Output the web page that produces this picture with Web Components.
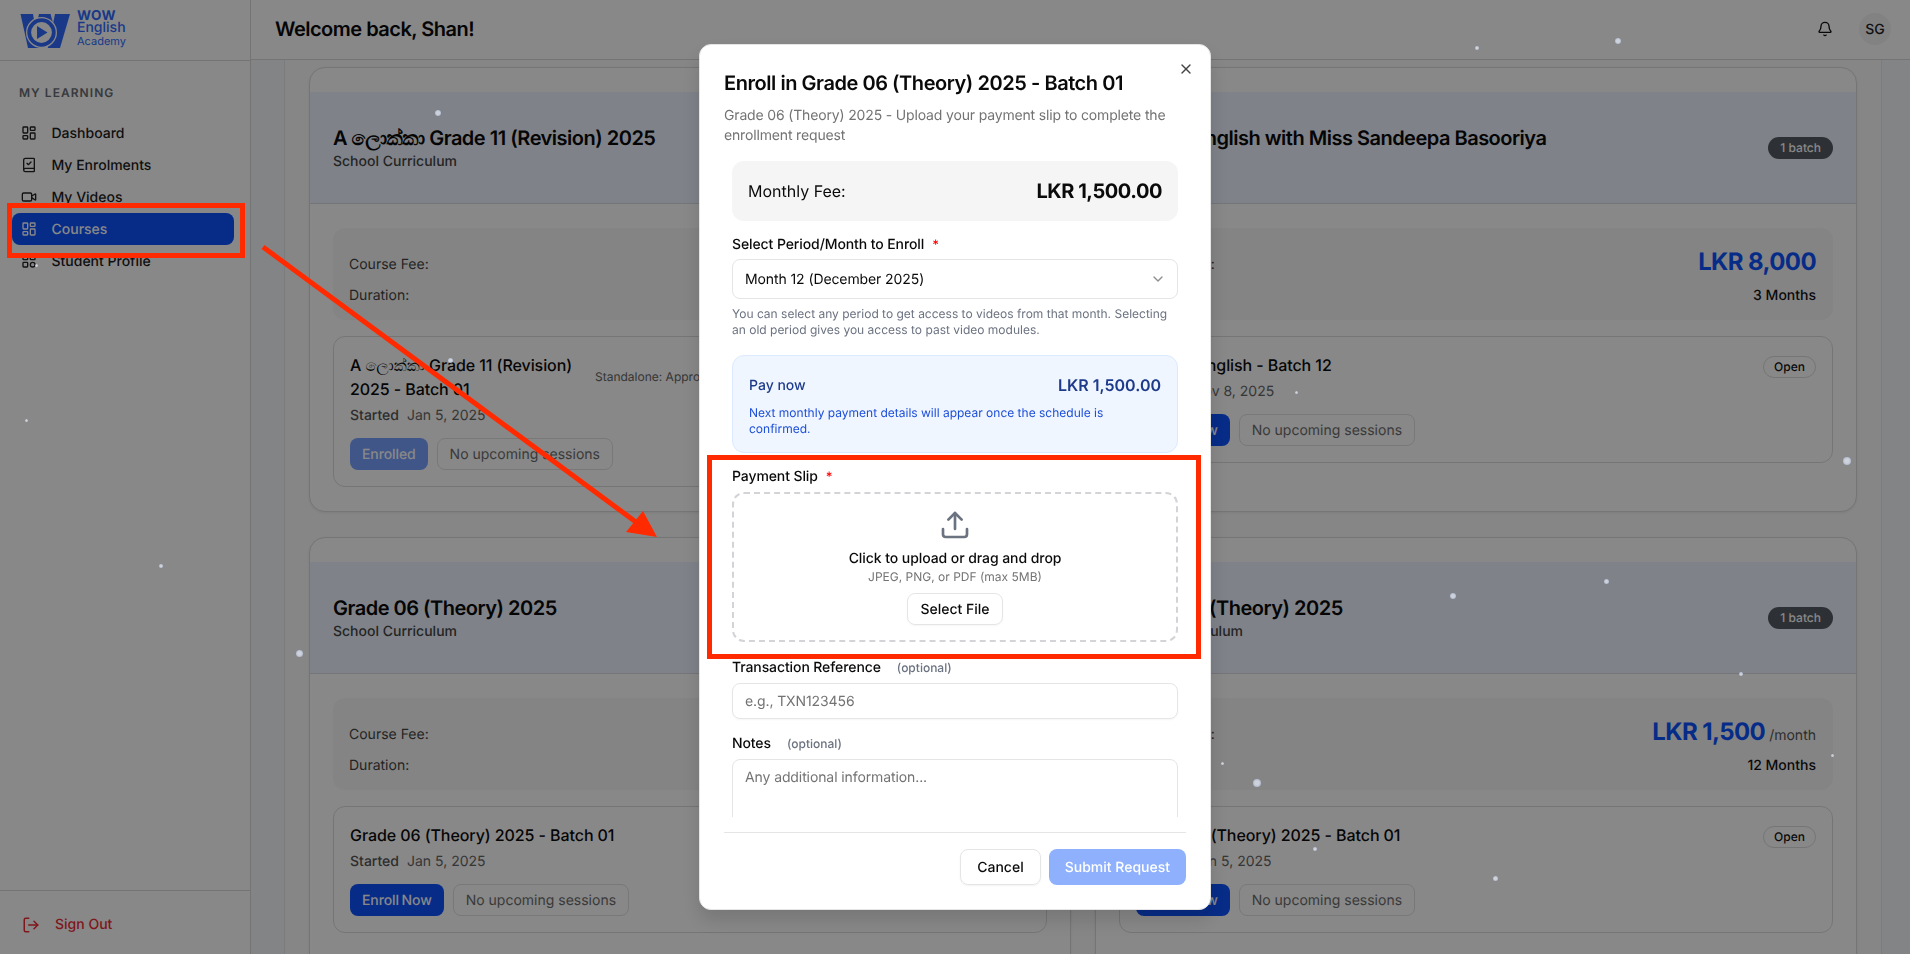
<!DOCTYPE html>
<html>
<head>
<meta charset="utf-8">
<title>Courses</title>
<style>
  html, body { margin: 0; height: 100%; overflow: hidden; }
  body { font-family: Inter, "Noto Sans", sans-serif; color: #0a0a0a; background: #fff; text-rendering: geometricPrecision; }
</style>
</head>
<body>
<app-shell>
  <app-sidebar slot="sidebar">
    <nav-item icon="dashboard" label="Dashboard"></nav-item>
    <nav-item icon="book" label="My Enrolments"></nav-item>
    <nav-item icon="video" label="My Videos"></nav-item>
    <nav-item icon="dashboard" label="Courses" active></nav-item>
    <nav-item icon="profile" label="Student Profile"></nav-item>
  </app-sidebar>
  <app-header slot="header" greeting="Welcome back, Shan!" initials="SG"></app-header>
  <course-card name="A ලොක්කා Grade 11 (Revision) 2025" sub="School Curriculum">
    <batch-card name="A ලොක්කා Grade 11 (Revision) 2025 - Batch 01" date="Jan 5, 2025" action="Enrolled" standalone="Standalone: Approved"></batch-card>
  </course-card>
  <course-card name="Spoken English with Miss Sandeepa Basooriya" batches="1 batch" price="LKR 8,000" duration="3 Months">
    <batch-card name="Spoken English - Batch 12" date="Nov 8, 2025" action="Enroll Now"></batch-card>
  </course-card>
  <course-card name="Grade 06 (Theory) 2025" sub="School Curriculum">
    <batch-card name="Grade 06 (Theory) 2025 - Batch 01" date="Jan 5, 2025" action="Enroll Now"></batch-card>
  </course-card>
  <course-card name="Grade 06 (Theory) 2025" sub="School Curriculum" batches="1 batch" price="LKR 1,500" per="/month" duration="12 Months">
    <batch-card name="Grade 06 (Theory) 2025 - Batch 01" date="Jan 5, 2025" action="Enroll Now"></batch-card>
  </course-card>
</app-shell>
<enroll-modal></enroll-modal>
<snow-layer></snow-layer>
<mark-up></mark-up>

<script>
const ICONS = {
  dashboard: '<rect x="3" y="3" width="7" height="9" rx="1"/><rect x="14" y="3" width="7" height="5" rx="1"/><rect x="14" y="12" width="7" height="9" rx="1"/><rect x="3" y="16" width="7" height="5" rx="1"/>',
  book: '<path d="M4 19.5v-15A2.5 2.5 0 0 1 6.5 2H19a1 1 0 0 1 1 1v18a1 1 0 0 1-1 1H6.5a1 1 0 0 1 0-5H20"/><path d="m9 9.5 2 2 4-4"/>',
  video: '<path d="m16 13 5.223 3.482a.5.5 0 0 0 .777-.416V7.87a.5.5 0 0 0-.752-.432L16 10.5"/><rect x="2" y="6" width="14" height="12" rx="2"/>',
  profile: '<rect x="3" y="3" width="7" height="7" rx="1"/><rect x="14" y="3" width="7" height="7" rx="1"/><rect x="3" y="14" width="7" height="7" rx="1"/><circle cx="17.5" cy="17.5" r="3.5"/>',
  logout: '<path d="M9 21H5a2 2 0 0 1-2-2V5a2 2 0 0 1 2-2h4"/><path d="m16 17 5-5-5-5"/><path d="M21 12H9"/>',
  bell: '<path d="M10.268 21a2 2 0 0 0 3.464 0"/><path d="M3.262 15.326A1 1 0 0 0 4 17h16a1 1 0 0 0 .74-1.673C19.41 13.956 18 12.499 18 8A6 6 0 0 0 6 8c0 4.499-1.411 5.956-2.738 7.326"/>',
  close: '<path d="M18 6 6 18"/><path d="m6 6 12 12"/>',
  chevron: '<path d="m6 9 6 6 6-6"/>',
  upload: '<path d="M12 3v12"/><path d="m17 8-5-5-5 5"/><path d="M21 15v4a2 2 0 0 1-2 2H5a2 2 0 0 1-2-2v-4"/>'
};

function icon(name, size) {
  return `<svg width="${size}" height="${size}" viewBox="0 0 24 24" fill="none" stroke="currentColor" stroke-width="2" stroke-linecap="round" stroke-linejoin="round" style="display:block;flex:none">${ICONS[name]}</svg>`;
}

class AppShell extends HTMLElement {
  constructor() {
    super();
    this.attachShadow({mode: 'open'});
    this.shadowRoot.innerHTML = `
      <style>
        :host { display: flex; height: 100vh; overflow: hidden; }
        .main { flex: 1; min-width: 0; display: flex; flex-direction: column; background: #f6f8fc; }
        .gutter { flex: 1; min-height: 0; overflow: hidden; padding: 0 28px 0 33px; }
        .panel { height: 100%; box-sizing: border-box; background: #fcfcfc; border-left: 1px solid #e8e8e8; border-right: 1px solid #e8e8e8; padding: 7px 24px 0; display: grid; grid-template-columns: 762px 762px; gap: 25px 24px; align-content: start; }
      </style>
      <slot name="sidebar"></slot>
      <div class="main">
        <slot name="header"></slot>
        <div class="gutter"><div class="panel"><slot></slot></div></div>
      </div>`;
  }
}

class AppSidebar extends HTMLElement {
  constructor() {
    super();
    this.attachShadow({mode: 'open'});
    this.shadowRoot.innerHTML = `
      <style>
        :host { display: flex; flex-direction: column; flex: none; width: 251px; box-sizing: border-box; border-right: 1px solid #d9d9d9; background: #fff; }
        .brand { height: 60px; box-sizing: content-box; border-bottom: 1px solid #d9d9d9; display: flex; align-items: center; padding-left: 20px; gap: 7px; color: #2f6cff; }
        .words { display: flex; flex-direction: column; line-height: 12px; margin-top: -4px; }
        .wow { font-size: 13.5px; font-weight: 700; letter-spacing: .4px; }
        .eng { font-size: 14px; font-weight: 500; }
        .aca { font-size: 11px; font-weight: 400; margin-top: 1px; }
        .nav { padding: 25px 16px 0 12px; display: flex; flex-direction: column; }
        .title { font-size: 12px; line-height: 14px; font-weight: 600; letter-spacing: 1.05px; color: #6a6d74; padding-left: 7px; margin-bottom: 17px; }
        .foot { margin-top: auto; height: 64px; box-sizing: border-box; padding-top: 4px; border-top: 1px solid #d9d9d9; display: flex; align-items: center; padding-left: 22px; gap: 15px; font-size: 14px; font-weight: 500; color: #ef2b33; }
      </style>
      <div class="brand">
        <svg width="50" height="35" viewBox="20 10 50 35" style="flex:none">
          <g fill="#2f6cff">
            <polygon points="20.5,11 33,11 39,45 28,45"/>
            <polygon points="39,11 50.5,11 60,45 48,45"/>
            <polygon points="48,45 60,45 70,11 55,11"/>
            <polygon points="39,11 50.5,11 39,45 31,45"/>
          </g>
          <circle cx="41.5" cy="29.5" r="15.5" fill="#fff"/>
          <circle cx="41.5" cy="29.5" r="12.3" fill="none" stroke="#2f6cff" stroke-width="3.8"/>
          <polygon points="37,23 47.5,29.5 37,36" fill="#2f6cff"/>
        </svg>
        <div class="words"><span class="wow">WOW</span><span class="eng">English</span><span class="aca">Academy</span></div>
      </div>
      <div class="nav"><div class="title">MY LEARNING</div><slot></slot></div>
      <div class="foot">${icon('logout', 18)}<span>Sign Out</span></div>`;
  }
}

class NavItem extends HTMLElement {
  constructor() {
    super();
    this.attachShadow({mode: 'open'});
  }
  connectedCallback() {
    this.shadowRoot.innerHTML = `
      <style>
        :host { display: flex; align-items: center; height: 32px; padding-left: 9px; gap: 14.5px; border-radius: 8px; font-size: 14px; font-weight: 500; color: #1c1c1c; }
        :host([active]) { background: #0d53ff; color: #fff; }
        svg { color: #222; }
        :host([active]) svg { color: #fff; }
      </style>
      ${icon(this.getAttribute('icon'), 16)}<span>${this.getAttribute('label')}</span>`;
  }
}

class AppHeader extends HTMLElement {
  constructor() {
    super();
    this.attachShadow({mode: 'open'});
  }
  connectedCallback() {
    this.shadowRoot.innerHTML = `
      <style>
        :host { display: flex; flex: none; align-items: center; border-bottom: 1px solid #d9d9d9; background: #fff; padding: 0 19px 1px 24px; box-sizing: border-box; height: 60px; }
        h1 { margin: 0; flex: 1; font-size: 20px; line-height: 28px; font-weight: 600; letter-spacing: -.5px; }
        .bell { color: #111; margin-right: 26px; }
        .avatar { width: 32px; height: 32px; border-radius: 50%; background: #f3f4f6; display: flex; align-items: center; justify-content: center; font-size: 14px; font-weight: 500; color: #222; }
      </style>
      <h1>${this.getAttribute('greeting')}</h1>
      <div class="bell">${icon('bell', 16)}</div>
      <div class="avatar">${this.getAttribute('initials')}</div>`;
  }
}

class CourseCard extends HTMLElement {
  constructor() {
    super();
    this.attachShadow({mode: 'open'});
  }
  connectedCallback() {
    const a = n => this.getAttribute(n);
    this.shadowRoot.innerHTML = `
      <style>
        :host { display: block; box-sizing: border-box; height: 445px; border: 1px solid #dcdcdc; border-radius: 16px; background: #fff; padding-top: 24px; box-shadow: 0 1px 3px rgba(0,0,0,.08); }
        .band { height: 112px; box-sizing: border-box; border-bottom: 1px solid #d9dce2; background: #eef4ff; padding: 0 23px; display: flex; align-items: center; justify-content: space-between; }
        .name { font-size: 20px; line-height: 28px; font-weight: 600; letter-spacing: -.5px; color: #0a0a0a; }
        .sub { font-size: 14px; line-height: 20px; min-height: 20px; font-weight: 500; color: #444; }
        .pill { font-size: 12px; line-height: 22px; padding: 0 12px; border-radius: 11px; background: #555a62; color: #fff; font-weight: 500; }
        .body { padding: 24px 23px 0; display: flex; flex-direction: column; gap: 16px; }
        .fee { box-sizing: border-box; height: 92px; border-radius: 12px; background: #f8f8f8; padding: 18px 17px 0 16px; display: flex; flex-direction: column; gap: 8px; }
        .row { display: flex; justify-content: space-between; align-items: flex-start; font-size: 14px; line-height: 20px; color: #444; }
        .row.top { height: 32px; }
        .row.top > span:first-child { margin-top: 9px; }
        .price { font-size: 24px; font-weight: 700; letter-spacing: -.6px; color: #0d53ff; line-height: 32px; }
        .per { font-size: 14px; font-weight: 400; letter-spacing: 0; color: #555; margin-left: 4px; }
        .dur { font-weight: 500; color: #111; }
      </style>
      <div class="band">
        <div><div class="name">${a('name')}</div><div class="sub">${a('sub') || ''}</div></div>
        ${a('batches') ? `<div class="pill">${a('batches')}</div>` : ''}
      </div>
      <div class="body">
        <div class="fee">
          <div class="row top"><span>Course Fee:</span><span class="price">${a('price') || ''}${a('per') ? `<span class="per">${a('per')}</span>` : ''}</span></div>
          <div class="row"><span>Duration:</span><span class="dur">${a('duration') || ''}</span></div>
        </div>
        <slot></slot>
      </div>`;
  }
}

class BatchCard extends HTMLElement {
  constructor() {
    super();
    this.attachShadow({mode: 'open'});
  }
  connectedCallback() {
    const a = n => this.getAttribute(n);
    const done = a('action') === 'Enrolled';
    this.shadowRoot.innerHTML = `
      <style>
        :host { display: block; box-sizing: border-box; border: 1px solid #dcdcdc; border-radius: 12px; padding: 16px; }
        .top { display: flex; align-items: flex-start; }
        .info { flex: 1; min-width: 0; }
        .info.narrow { flex: none; width: 229px; margin-right: 16px; }
        .name { font-size: 16px; line-height: 24px; font-weight: 500; letter-spacing: -.08px; color: #0a0a0a; }
        .date { margin-top: 5px; font-size: 14px; line-height: 20px; color: #666; display: flex; gap: 8px; }
        .date b { font-weight: 500; color: #555; }
        .standalone { flex: 1; font-size: 12px; line-height: 16px; color: #666; margin-top: 16px; white-space: nowrap; }
        .badge { font-size: 12px; line-height: 20px; font-weight: 500; padding: 0 10px; border: 1px solid #dcdcdc; border-radius: 11px; margin-top: 3px; color: #111; }
        .acts { display: flex; gap: 9px; margin-top: 12px; }
        .btn { height: 32px; box-sizing: border-box; display: flex; align-items: center; padding: 0 12px; border-radius: 8px; font-size: 14px; font-weight: 500; letter-spacing: -.1px; word-spacing: -1px; background: #0d53ff; color: #fff; }
        .btn.off { opacity: .55; }
        .none { height: 32px; box-sizing: border-box; display: flex; align-items: center; padding: 0 12px; border: 1px solid #e2e2e2; border-radius: 8px; font-size: 14px; color: #6d6d6d; }
      </style>
      <div class="top">
        <div class="info ${a('standalone') ? 'narrow' : ''}">
          <div class="name">${a('name')}</div>
          <div class="date"><b>Started</b><span>${a('date')}</span></div>
        </div>
        ${a('standalone') ? `<div class="standalone">${a('standalone')}</div>` : ''}
        <div class="badge">Open</div>
      </div>
      <div class="acts"><div class="btn ${done ? 'off' : ''}">${a('action')}</div><div class="none">No upcoming sessions</div></div>`;
  }
}

class EnrollModal extends HTMLElement {
  constructor() {
    super();
    this.attachShadow({mode: 'open'});
    this.shadowRoot.innerHTML = `
      <style>
        :host { position: fixed; inset: 0; display: flex; align-items: center; justify-content: center; background: rgba(0,0,0,.465); }
        .box { position: relative; width: 512px; height: 866px; box-sizing: border-box; background: #fff; border: 1px solid #e5e5e5; border-radius: 12px; padding: 24px; display: flex; flex-direction: column; box-shadow: 0 10px 20px rgba(0,0,0,.14); font-size: 14px; color: #0a0a0a; }
        .x { position: absolute; top: 16px; right: 16px; color: #444; }
        h2 { margin: 0; font-size: 20px; line-height: 28px; font-weight: 600; letter-spacing: -.45px; }
        .lead { margin: 9px 0 15px; font-size: 14px; line-height: 20px; letter-spacing: -.16px; color: #737373; }
        .scroll { flex: 1; min-height: 0; overflow: hidden; padding: 0 8px; }
        .fee { height: 60px; box-sizing: border-box; border-radius: 12px; background: #f5f5f5; padding: 0 16px; display: flex; align-items: center; justify-content: space-between; font-size: 16px; }
        .fee b { font-size: 20px; font-weight: 700; letter-spacing: -.45px; }
        .label { display: flex; align-items: baseline; height: 15px; line-height: 15px; font-weight: 500; letter-spacing: -.1px; margin-bottom: 7px; }
        .star { color: #f00; margin-left: 8px; font-size: 13px; }
        .opt { margin-left: 16px; font-size: 12px; font-weight: 500; letter-spacing: 0; color: #6b7280; }
        .field { box-sizing: border-box; border: 1px solid #e5e5e5; border-radius: 8px; padding: 0 12px; display: flex; align-items: center; justify-content: space-between; letter-spacing: -.1px; }
        .select { height: 40px; }
        .select svg { color: #8d8d8d; margin-right: -1px; }
        .help { margin: 7px 0 17px; font-size: 12px; line-height: 16px; color: #6b7280; }
        .pay { box-sizing: border-box; height: 98px; border: 1px solid #dbeafe; border-radius: 12px; background: #eff6ff; padding: 16px; margin-bottom: 16px; }
        .pay .r { display: flex; justify-content: space-between; align-items: center; height: 26px; color: #1e3a8a; font-weight: 500; }
        .pay .r b { font-size: 16px; font-weight: 600; }
        .pay p { margin: 7px 0 0; font-size: 12px; line-height: 16px; color: #1d4ed8; }
        .drop { box-sizing: border-box; height: 150px; border: 2px dashed #d4d4d8; border-radius: 12px; display: flex; flex-direction: column; align-items: center; padding-top: 15px; margin-bottom: 18px; }
        .drop svg { color: #6b7280; }
        .drop .t { margin-top: 8px; font-weight: 500; line-height: 20px; letter-spacing: -.07px; }
        .drop .s { font-size: 12px; line-height: 16px; color: #737373; margin-top: 0; }
        .drop .pick { margin-top: 8px; height: 32px; box-sizing: border-box; border: 1px solid #e5e5e5; border-radius: 8px; display: flex; align-items: center; padding: 0 12px; font-weight: 500; box-shadow: 0 1px 2px rgba(0,0,0,.04); }
        .ph { color: #737373; }
        .input { height: 36px; margin-bottom: 17px; box-shadow: 0 1px 2px rgba(0,0,0,.04); }
        .area { height: 80px; align-items: flex-start; padding-top: 8px; line-height: 20px; }
        .foot { margin-top: 15px; border-top: 1px solid #e5e5e5; padding-top: 16px; display: flex; justify-content: flex-end; gap: 8px; }
        .foot div { height: 36px; box-sizing: border-box; display: flex; align-items: center; border-radius: 8px; font-weight: 500; }
        .cancel { border: 1px solid #e5e5e5; padding: 0 16px; box-shadow: 0 1px 2px rgba(0,0,0,.05); }
        .submit { background: #8fb0fd; color: #fff; padding: 0 16px; }
      </style>
      <div class="box">
        <div class="x">${icon('close', 16)}</div>
        <h2>Enroll in Grade 06 (Theory) 2025 - Batch 01</h2>
        <p class="lead">Grade 06 (Theory) 2025 - Upload your payment slip to complete the enrollment request</p>
        <div class="scroll">
          <div class="fee" style="margin-bottom:16px"><span>Monthly Fee:</span><b>LKR 1,500.00</b></div>
          <div class="label">Select Period/Month to Enroll<span class="star">*</span></div>
          <div class="field select"><span>Month 12 (December 2025)</span>${icon('chevron', 16)}</div>
          <p class="help">You can select any period to get access to videos from that month. Selecting an old period gives you access to past video modules.</p>
          <div class="pay">
            <div class="r"><span>Pay now</span><b>LKR 1,500.00</b></div>
            <p>Next monthly payment details will appear once the schedule is confirmed.</p>
          </div>
          <div class="label" style="margin-bottom:8px">Payment Slip<span class="star">*</span></div>
          <div class="drop">
            ${icon('upload', 32)}
            <div class="t">Click to upload or drag and drop</div>
            <div class="s">JPEG, PNG, or PDF (max 5MB)</div>
            <div class="pick">Select File</div>
          </div>
          <div class="label" style="margin-bottom:8px">Transaction Reference<span class="opt">(optional)</span></div>
          <div class="field input"><span class="ph">e.g., TXN123456</span></div>
          <div class="label" style="margin-bottom:8px">Notes<span class="opt">(optional)</span></div>
          <div class="field area"><span class="ph">Any additional information...</span></div>
        </div>
        <div class="foot"><div class="cancel">Cancel</div><div class="submit">Submit Request</div></div>
      </div>`;
  }
}

// falling snow sits over the dimmed page, each flake is x, y, radius
const FLAKES = [[438,113,3],[450,360,2.5],[26,420,1.5],[161,566,2],[299,653,3.5],[1477,48,2],[1618,41,3],[1847,461,4],[1296,392,1.5],[1453,596,3],[1606,581,2.5],[1741,674,2],[1832,755,1.5],[1222,763,1.5],[1257,783,4],[1315,849,2],[1495,878,2.5],[36,265,1.5]];

class SnowLayer extends HTMLElement {
  constructor() {
    super();
    this.attachShadow({mode: 'open'});
    const dots = FLAKES.map(([x, y, r]) => `<i style="left:${x - r}px;top:${y - r}px;width:${r * 2}px;height:${r * 2}px"></i>`).join('');
    this.shadowRoot.innerHTML = `
      <style>
        :host { position: fixed; inset: 0; pointer-events: none; }
        i { position: absolute; border-radius: 50%; opacity: .75; background: radial-gradient(circle, #e6ebf7 35%, #b9c6e2 75%, rgba(185,198,226,.4)); }
      </style>${dots}`;
  }
}

class MarkUp extends HTMLElement {
  constructor() {
    super();
    this.attachShadow({mode: 'open'});
    this.shadowRoot.innerHTML = `
      <style>
        :host { position: fixed; inset: 0; pointer-events: none; }
        svg { display: block; }
      </style>
      <svg width="1910" height="954" fill="none" stroke="#ff2a00" stroke-width="5">
        <rect x="9.5" y="205.5" width="233" height="50"/>
        <rect x="709.5" y="457.5" width="489" height="199"/>
        <line x1="263" y1="247" x2="640" y2="525"/>
        <polygon points="657,537 626,532 643,511" fill="#ff2a00" stroke="none"/>
      </svg>`;
  }
}

customElements.define('app-shell', AppShell);
customElements.define('app-sidebar', AppSidebar);
customElements.define('nav-item', NavItem);
customElements.define('app-header', AppHeader);
customElements.define('course-card', CourseCard);
customElements.define('batch-card', BatchCard);
customElements.define('enroll-modal', EnrollModal);
customElements.define('snow-layer', SnowLayer);
customElements.define('mark-up', MarkUp);
</script>
</body>
</html>
